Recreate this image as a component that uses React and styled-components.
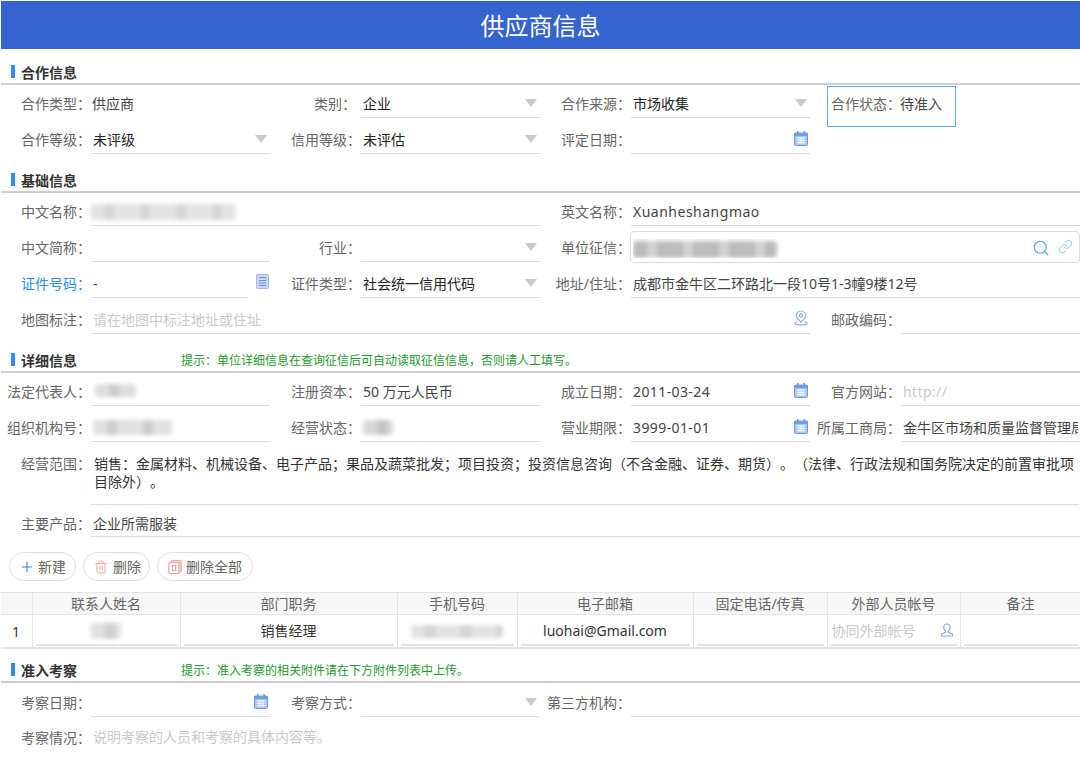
import React from "react";
import styled, { createGlobalStyle } from "styled-components";
import { Plus, Trash2, Search, Link } from "lucide-react";

const GlobalStyle = createGlobalStyle`
  html, body {
    margin: 0;
    padding: 0;
    background: #fff;
  }
  body {
    font-family: "Noto Sans", "Noto Sans CJK SC", sans-serif;
    color: #333;
  }
`;

const Page = styled.div`
  width: 1080px;
  height: 774px;
  padding: 1px 0 0 1px;
  box-sizing: border-box;
  overflow: hidden;
`;

const Header = styled.h1`
  margin: 0;
  height: 48px;
  line-height: 50px;
  background: #3563d0;
  color: #fff;
  font-size: 24px;
  font-weight: 400;
  text-align: center;
`;

const SectionHead = styled.div`
  display: flex;
  align-items: center;
  height: 35px;
  margin: ${(p) => p.$top || 0}px 0 ${(p) => p.$bottom ?? 1}px;
  padding: 10px 0 0 10px;
  box-sizing: border-box;
  border-bottom: 2px solid #cfcfcf;
`;

const SectionTitle = styled.div`
  width: 170px;
  flex: none;
  display: flex;
  align-items: center;
  gap: 6px;
  font-size: 14px;
  font-weight: 700;
  color: #333;
  &::before {
    content: "";
    width: 4px;
    height: 13px;
    background: #2a8cf5;
  }
`;

const Hint = styled.div`
  font-size: 12px;
  color: #1d9a2c;
`;

const Row = styled.div`
  display: grid;
  grid-template-columns: repeat(4, 270px);
  height: 36px;
`;

const Field = styled.div`
  position: relative;
  display: grid;
  grid-template-columns: 90px 1fr;
  grid-column: span ${(p) => p.$span || 1};
  min-width: 0;
  ${(p) =>
    p.$selected &&
    `&::after {
      content: "";
      position: absolute;
      left: 16px;
      top: 0;
      width: 129px;
      height: 41px;
      box-sizing: border-box;
      border: 1px solid #5ba8e6;
    }`}
`;

const Label = styled.label`
  padding: ${(p) => p.$top ?? 8}px ${(p) => p.$pad || 0}px 0 0;
  height: 24px;
  line-height: 20px;
  text-align: right;
  white-space: nowrap;
  font-size: 14px;
  color: ${(p) => (p.$link ? "#2a8cf5" : "#666")};
`;

const Value = styled.div`
  display: flex;
  align-items: flex-start;
  height: 32px;
  margin-left: ${(p) => p.$shift || 0}px;
  margin-right: ${(p) => p.$right ?? 1}px;
  padding: ${(p) => p.$top ?? 8}px 2px 0 2px;
  box-sizing: border-box;
  line-height: 20px;
  font-size: 14px;
  color: #333;
  min-width: 0;
  border-bottom: ${(p) => (p.$plain ? "none" : "1px solid #dcdcdc")};
`;

const BoxedValue = styled(Value)`
  margin: 1px 1px 0 -1px;
  padding: 7px 6px 0 2px;
  border: 1px solid #dcdcdc;
  border-radius: 4px;
`;

const LongRow = styled.div`
  display: grid;
  grid-template-columns: 90px 1fr;
  height: 59px;
`;

const LongText = styled.div`
  margin-right: 1px;
  padding: 9px 0 0 3px;
  box-sizing: border-box;
  font-size: 14px;
  line-height: 18px;
  color: #333;
  text-spacing-trim: space-all;
  border-bottom: 1px solid #dcdcdc;
`;

const Text = styled.span`
  flex: 1;
  min-width: 0;
  white-space: nowrap;
  overflow: hidden;
  color: ${(p) => (p.$dark ? "#222" : "#444")};
  letter-spacing: ${(p) => p.$spacing || 0}px;
`;

const Placeholder = styled(Text)`
  color: #c9c9c9;
`;

const Arrow = styled.i`
  flex: none;
  width: 0;
  height: 0;
  margin: 5px 1px 0 0;
  border-left: 6px solid transparent;
  border-right: 6px solid transparent;
  border-top: 8px solid #cbcbcb;
`;

const Smudge = styled.span`
  display: block;
  width: ${(p) => p.$width}px;
  height: ${(p) => p.$height || 16}px;
  margin: 2px 0 0 ${(p) => p.$left || 0}px;
  border-radius: 4px;
  filter: blur(2.2px);
  background: repeating-linear-gradient(
    90deg,
    ${(p) => p.$a} 0 14px,
    ${(p) => p.$b} 14px 24px,
    ${(p) => p.$a} 24px 36px
  );
`;

const IconSlot = styled.span`
  flex: none;
  display: flex;
  margin-top: ${(p) => p.$top ?? 1}px;
  margin-right: ${(p) => p.$right || 0}px;
  color: ${(p) => p.$color || "#6e9be8"};
`;

const CertIconSlot = styled.span`
  position: absolute;
  right: 2px;
  top: 8px;
  display: flex;
`;

const Toolbar = styled.div`
  display: flex;
  gap: 7px;
  margin: 11px 0 11px 8px;
`;

const ToolButton = styled.button`
  display: flex;
  align-items: center;
  gap: ${(p) => p.$gap || 4}px;
  height: 29px;
  padding: 0 ${(p) => p.$padRight || 9}px 2px ${(p) => p.$pad || 10}px;
  border: 1px solid #dfdfdf;
  border-radius: 15px;
  background: #fff;
  font-family: inherit;
  font-size: 14px;
  color: #666;
`;

const Table = styled.table`
  width: 1080px;
  table-layout: fixed;
  border-collapse: collapse;
  font-size: 14px;
  border-bottom: 2px solid #e2e2e2;
`;

const Th = styled.th`
  height: 21px;
  padding: 0;
  background: #f7f7f7;
  border: 1px solid #e4e4e4;
  border-left: ${(p) => (p.$first ? "none" : "1px solid #e4e4e4")};
  font-weight: 400;
  color: #666;
  line-height: 20px;
`;

const Td = styled.td`
  height: 32px;
  padding: 0;
  border-right: 1px solid #e4e4e4;
  color: #333;
  text-align: ${(p) => (p.$index ? "left" : "center")};
  padding-left: ${(p) => (p.$index ? "11px" : 0)};
`;

const CellInner = styled.div`
  display: flex;
  align-items: center;
  justify-content: ${(p) => p.$justify || "center"};
  height: 30px;
  margin: 0 3px;
  box-sizing: border-box;
  border-bottom: 2px solid #e4e4e4;
  padding: 0 ${(p) => p.$pad || 0}px;
  color: ${(p) => p.$color || "#333"};
`;

const CalendarIcon = () => (
  <svg width="14" height="15" viewBox="0 0 14 15">
    <rect x="3" y="0" width="1.6" height="3" fill="#6e9be8" />
    <rect x="9.4" y="0" width="1.6" height="3" fill="#6e9be8" />
    <rect x="0.5" y="2" width="13" height="12.5" rx="1" fill="#a9c3f2" stroke="#6e9be8" />
    <rect x="0.5" y="2" width="13" height="3" fill="#6e9be8" />
    <path d="M2.5 7h9M2.5 9.3h9M2.5 11.6h9M4.8 6v7M7 6v7M9.2 6v7" stroke="#fff" strokeWidth="0.8" />
  </svg>
);

const RegisterIcon = () => (
  <svg width="13" height="15" viewBox="0 0 13 15">
    <rect x="0.5" y="0.5" width="12" height="14" rx="1" fill="#c9d5f5" stroke="#a4b6ec" />
    <path d="M3 3.5h7M3 6.5h7M3 9h7M3 11.5h7" stroke="#6d8fe0" strokeWidth="1" />
  </svg>
);

const PinIcon = () => (
  <svg width="14" height="16" viewBox="0 0 14 16" fill="none" stroke="#8fa9e6" strokeWidth="1.2">
    <path d="M7 1a4.6 4.6 0 0 1 4.6 4.6C11.6 8.5 7 12 7 12S2.4 8.5 2.4 5.6A4.6 4.6 0 0 1 7 1z" />
    <circle cx="7" cy="5.5" r="1.6" />
    <path d="M3.5 11.5C1.8 12.2 1 13 1 13.6c0 .8 2.7 1.4 6 1.4s6-.6 6-1.4c0-.6-.8-1.4-2.5-2.1" />
  </svg>
);

const PersonIcon = () => (
  <svg width="14" height="14" viewBox="0 0 14 14" fill="none" stroke="#86a4e8" strokeWidth="1.1">
    <path d="M7 1c2 0 3.2 1.5 3.2 3.4 0 1.5-.8 2.8-1.7 3.5v1.4l4 1.7v2H1.500v-2l4-1.700V7.900c-.9-.7-1.700-2-1.700-3.500C3.800 2.500 5 1 7 1z" />
  </svg>
);

const ClearAllIcon = () => (
  <svg width="14" height="14" viewBox="0 0 14 14" fill="none" stroke="#f3a3a3" strokeWidth="1.2">
    <rect x="3" y="0.7" width="10.3" height="11.3" rx="1.5" fill="#fbdcdc" />
    <rect x="0.7" y="2.5" width="10.3" height="11" rx="1.5" fill="#fff" />
    <path d="M3.5 5.5h5M4.5 5.5v5h3v-5" />
  </svg>
);

const SelectField = ({ label, value, pad }) => (
  <Field>
    <Label $pad={pad}>{label}</Label>
    <Value>
      <Text $dark>{value}</Text>
      <Arrow />
    </Value>
  </Field>
);

const DateField = ({ label, value, link }) => (
  <Field>
    <Label $link={link}>{label}</Label>
    <Value>
      <Text $spacing={0.4}>{value}</Text>
      <IconSlot>
        <CalendarIcon />
      </IconSlot>
    </Value>
  </Field>
);

const TextField = ({ label, span, link, top, children }) => (
  <Field $span={span}>
    <Label $link={link} $top={top}>
      {label}
    </Label>
    <Value $top={top}>{children}</Value>
  </Field>
);

const contacts = [
  { title: "联系人姓名", width: 148 },
  { title: "部门职务", width: 217 },
  { title: "手机号码", width: 120 },
  { title: "电子邮箱", width: 176 },
  { title: "固定电话/传真", width: 134 },
  { title: "外部人员帐号", width: 133 },
  { title: "备注", width: 121 },
];

const App = () => {
  return (
    <Page>
      <GlobalStyle />
      <Header>供应商信息</Header>

      <SectionHead $top={1}>
        <SectionTitle>合作信息</SectionTitle>
      </SectionHead>
      <Row>
        <Field>
          <Label>合作类型：</Label>
          <Value $plain $shift={-1}>
            <Text>供应商</Text>
          </Value>
        </Field>
        <SelectField label="类别：" value="企业" pad={5} />
        <SelectField label="合作来源：" value="市场收集" />
        <Field $selected>
          <Label>合作状态：</Label>
          <Value $plain $shift={-3}>
            <Text>待准入</Text>
          </Value>
        </Field>
      </Row>
      <Row>
        <SelectField label="合作等级：" value="未评级" />
        <SelectField label="信用等级：" value="未评估" />
        <DateField label="评定日期：" />
      </Row>

      <SectionHead>
        <SectionTitle>基础信息</SectionTitle>
      </SectionHead>
      <Row>
        <TextField label="中文名称：" span={2}>
          <Smudge $width={146} $left={-3} $a="#e4e4e4" $b="#d6d6d6" />
        </TextField>
        <TextField label="英文名称：" span={2}>
          <Text $spacing={0.5}>Xuanheshangmao</Text>
        </TextField>
      </Row>
      <Row>
        <TextField label="中文简称：" />
        <SelectField label="行业：" />
        <Field $span={2}>
          <Label>单位征信：</Label>
          <BoxedValue>
            <Text>
              <Smudge $width={144} $a="#bcbcbc" $b="#d2d2d2" $height={17} />
            </Text>
            <IconSlot $top={0} $right={8} $color="#55a6ea">
              <Search size={18} strokeWidth={1.6} />
            </IconSlot>
            <IconSlot $top={0} $color="#8fbdf0">
              <Link size={15} strokeWidth={1.6} />
            </IconSlot>
          </BoxedValue>
        </Field>
      </Row>
      <Row>
        <Field>
          <Label $link>证件号码：</Label>
          <Value $right={24}>
            <Text>-</Text>
          </Value>
          <CertIconSlot>
            <RegisterIcon />
          </CertIconSlot>
        </Field>
        <SelectField label="证件类型：" value="社会统一信用代码" />
        <TextField label="地址/住址：" span={2}>
          <Text>成都市金牛区二环路北一段10号1-3幢9楼12号</Text>
        </TextField>
      </Row>
      <Row>
        <TextField label="地图标注：" span={3}>
          <Placeholder>请在地图中标注地址或住址</Placeholder>
          <IconSlot $top={0}>
            <PinIcon />
          </IconSlot>
        </TextField>
        <TextField label="邮政编码：" />
      </Row>

      <SectionHead>
        <SectionTitle>详细信息</SectionTitle>
        <Hint>提示：单位详细信息在查询征信后可自动读取征信信息，否则请人工填写。</Hint>
      </SectionHead>
      <Row>
        <TextField label="法定代表人：">
          <Smudge $width={41} $height={13} $left={2} $a="#dedede" $b="#cccccc" />
        </TextField>
        <TextField label="注册资本：">
          <Text>50 万元人民币</Text>
        </TextField>
        <DateField label="成立日期：" value="2011-03-24" />
        <TextField label="官方网站：">
          <Placeholder $spacing={0.4}>http://</Placeholder>
        </TextField>
      </Row>
      <Row>
        <TextField label="组织机构号：">
          <Smudge $width={79} $height={15} $a="#e0e0e0" $b="#cdcdcd" />
        </TextField>
        <TextField label="经营状态：">
          <Smudge $width={30} $height={15} $a="#d8d8d8" $b="#c2c2c2" />
        </TextField>
        <DateField label="营业期限：" value="3999-01-01" />
        <TextField label="所属工商局：">
          <Text>金牛区市场和质量监督管理局</Text>
        </TextField>
      </Row>
      <LongRow>
        <Label>经营范围：</Label>
        <LongText>
          销售：金属材料、机械设备、电子产品；果品及蔬菜批发；项目投资；投资信息咨询（不含金融、证券、期货）。（法律、行政法规和国务院决定的前置审批项目除外）。
        </LongText>
      </LongRow>
      <Row>
        <TextField label="主要产品：" span={4} top={9}>
          <Text>企业所需服装</Text>
        </TextField>
      </Row>

      <Toolbar>
        <ToolButton $pad={9} $gap={3}>
          <IconSlot $top={2} $color="#3f7fe0">
            <Plus size={16} strokeWidth={1.6} />
          </IconSlot>
          新建
        </ToolButton>
        <ToolButton $gap={5} $padRight={8}>
          <IconSlot $top={2} $color="#f29a9a">
            <Trash2 size={14} strokeWidth={1.5} />
          </IconSlot>
          删除
        </ToolButton>
        <ToolButton $padRight={10}>
          <IconSlot $top={2}>
            <ClearAllIcon />
          </IconSlot>
          删除全部
        </ToolButton>
      </Toolbar>

      <Table>
        <colgroup>
          <col width="31" />
          {contacts.map((c) => (
            <col key={c.title} width={c.width} />
          ))}
        </colgroup>
        <thead>
          <tr>
            <Th $first />
            {contacts.map((c) => (
              <Th key={c.title}>{c.title}</Th>
            ))}
          </tr>
        </thead>
        <tbody>
          <tr>
            <Td $index>1</Td>
            <Td>
              <CellInner>
                <Smudge $width={30} $a="#e0e0e0" $b="#d0d0d0" />
              </CellInner>
            </Td>
            <Td>
              <CellInner>销售经理</CellInner>
            </Td>
            <Td>
              <CellInner>
                <Smudge $width={92} $height={13} $a="#e2e2e2" $b="#d4d4d4" />
              </CellInner>
            </Td>
            <Td>
              <CellInner>luohai@Gmail.com</CellInner>
            </Td>
            <Td>
              <CellInner />
            </Td>
            <Td>
              <CellInner $justify="space-between" $pad={1} $color="#c9c9c9">
                协同外部帐号
                <IconSlot $top={0} $right={2}>
                  <PersonIcon />
                </IconSlot>
              </CellInner>
            </Td>
            <Td>
              <CellInner />
            </Td>
          </tr>
        </tbody>
      </Table>

      <SectionHead $top={-1} $bottom={2}>
        <SectionTitle>准入考察</SectionTitle>
        <Hint>提示：准入考察的相关附件请在下方附件列表中上传。</Hint>
      </SectionHead>
      <Row>
        <DateField label="考察日期：" />
        <SelectField label="考察方式：" />
        <TextField label="第三方机构：" span={2} />
      </Row>
      <Row>
        <Field $span={4}>
          <Label $top={7}>考察情况：</Label>
          <Value $plain $top={6}>
            <Placeholder>说明考察的人员和考察的具体内容等。</Placeholder>
          </Value>
        </Field>
      </Row>
    </Page>
  );
};

export default App;
